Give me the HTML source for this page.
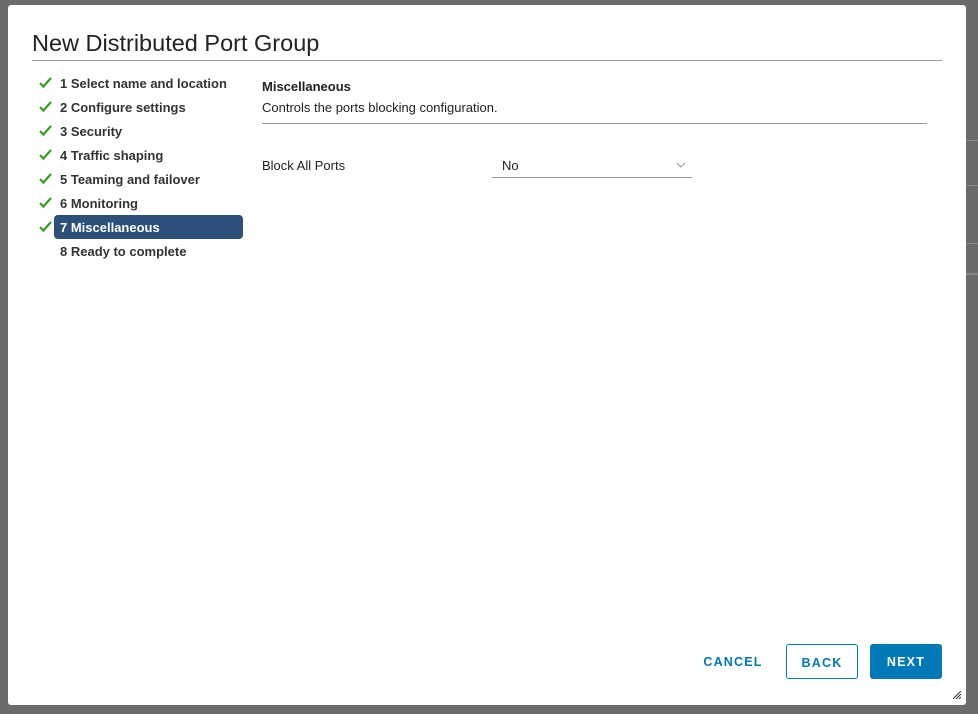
<!DOCTYPE html>
<html><head><style>
body{margin:0;width:978px;height:714px;background:#6b6b6b;position:relative;overflow:hidden;font-family:"Liberation Sans",sans-serif;}
.dlg{position:absolute;left:8px;top:5px;width:958px;height:700px;background:#fff;border-radius:3px;}
.title{position:absolute;left:24px;top:25px;font-size:23.5px;color:#222;}
.hr{position:absolute;left:24px;top:55px;width:910px;height:1px;background:#9a9a9a;}
.step{position:absolute;left:52px;font-size:13px;font-weight:bold;color:#333;}
.chk{position:absolute;left:31px;width:13px;height:13px;}
.sel{position:absolute;left:46px;top:210px;width:189px;height:24px;background:#2b5079;border-radius:4px;}
.btn{position:absolute;top:639px;height:35px;border-radius:3px;font-size:12.5px;letter-spacing:1.2px;font-weight:bold;text-align:center;line-height:36px;box-sizing:border-box;}
</style></head><body>
<div style="position:absolute;left:966px;top:140px;width:12px;height:1px;background:#888"></div>
<div style="position:absolute;left:966px;top:185px;width:12px;height:1px;background:#888"></div>
<div style="position:absolute;left:966px;top:243px;width:12px;height:1px;background:#888"></div>
<div style="position:absolute;left:966px;top:273px;width:12px;height:2px;background:#888"></div>
<div class="dlg">
<div class="title">New Distributed Port Group</div>
<div class="hr"></div>
<div class="sel"></div>
<svg class="chk" style="top:71px" viewBox="0 0 13 13"><path d="M1 7l3.5 3.5L12 2" stroke="#3a9a2a" stroke-width="2.2" fill="none"/></svg>
<svg class="chk" style="top:95px" viewBox="0 0 13 13"><path d="M1 7l3.5 3.5L12 2" stroke="#3a9a2a" stroke-width="2.2" fill="none"/></svg>
<svg class="chk" style="top:119px" viewBox="0 0 13 13"><path d="M1 7l3.5 3.5L12 2" stroke="#3a9a2a" stroke-width="2.2" fill="none"/></svg>
<svg class="chk" style="top:143px" viewBox="0 0 13 13"><path d="M1 7l3.5 3.5L12 2" stroke="#3a9a2a" stroke-width="2.2" fill="none"/></svg>
<svg class="chk" style="top:167px" viewBox="0 0 13 13"><path d="M1 7l3.5 3.5L12 2" stroke="#3a9a2a" stroke-width="2.2" fill="none"/></svg>
<svg class="chk" style="top:191px" viewBox="0 0 13 13"><path d="M1 7l3.5 3.5L12 2" stroke="#3a9a2a" stroke-width="2.2" fill="none"/></svg>
<svg class="chk" style="top:215px" viewBox="0 0 13 13"><path d="M1 7l3.5 3.5L12 2" stroke="#3a9a2a" stroke-width="2.2" fill="none"/></svg>
<div class="step" style="top:71px">1 Select name and location</div>
<div class="step" style="top:95px">2 Configure settings</div>
<div class="step" style="top:119px">3 Security</div>
<div class="step" style="top:143px">4 Traffic shaping</div>
<div class="step" style="top:167px">5 Teaming and failover</div>
<div class="step" style="top:191px">6 Monitoring</div>
<div class="step" style="top:215px;color:#fff">7 Miscellaneous</div>
<div class="step" style="top:239px">8 Ready to complete</div>
<div style="position:absolute;left:254px;top:74px;font-size:13px;font-weight:bold;color:#222">Miscellaneous</div>
<div style="position:absolute;left:254px;top:95px;font-size:13px;color:#222">Controls the ports blocking configuration.</div>
<div style="position:absolute;left:254px;top:118px;width:665px;height:1px;background:#999"></div>
<div style="position:absolute;left:254px;top:153px;font-size:13px;color:#222">Block All Ports</div>
<div style="position:absolute;left:494px;top:153px;font-size:13px;color:#222">No</div>
<svg style="position:absolute;left:668px;top:157px" width="10" height="6" viewBox="0 0 10 6"><path d="M1 1l4 4 4-4" stroke="#999" fill="none"/></svg>
<div style="position:absolute;left:484px;top:172px;width:200px;height:1px;background:#999"></div>
<div class="btn" style="left:680px;width:90px;color:#0079b8">CANCEL</div>
<div class="btn" style="left:778px;width:72px;border:1px solid #0079b8;color:#0079b8">BACK</div>
<div class="btn" style="left:862px;width:72px;background:#0079b8;color:#fff">NEXT</div>
<svg style="position:absolute;left:945px;top:686px" width="8" height="8" viewBox="0 0 8 8"><path d="M0 8L8 0M3 8L8 3M6 8L8 6" stroke="#333"/></svg>
</div>
</body></html>
